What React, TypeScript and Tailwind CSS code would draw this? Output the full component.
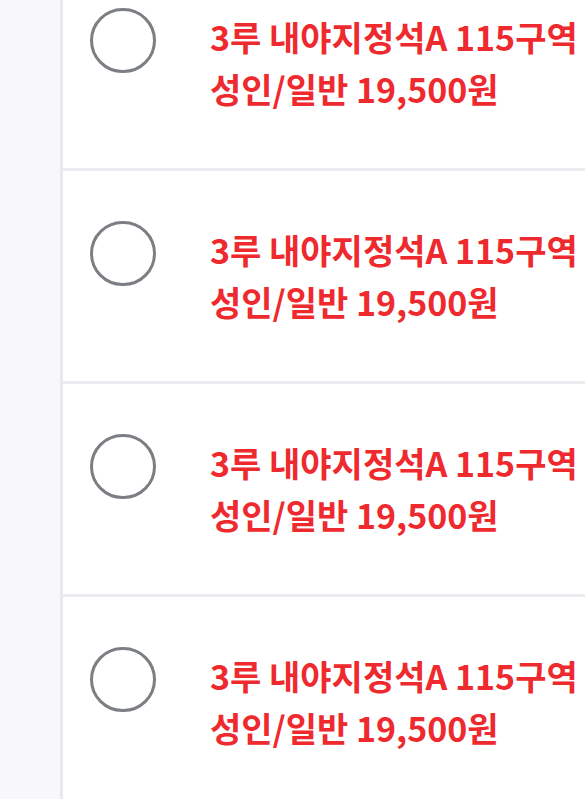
import React from "react";

function Row() {
  return (
    <div className="flex h-[213px] shrink-0 items-center border-b-[3px] border-[#ebebef] pl-[27px]">
      <div className="flex items-start">
        <div className="mt-[-3px] h-[65px] w-[66px] shrink-0 rounded-full border-[3px] border-[#7b7e83] bg-white" />
        <div className="ml-[54px] whitespace-nowrap text-[34px] font-bold leading-[52px] text-[#ee2a2f]">
          <div>3루 내야지정석A 115구역</div>
          <div>성인/일반 19,500원</div>
        </div>
      </div>
    </div>
  );
}

export default function App() {
  return (
    <div
      className="flex h-[799px] w-[585px] overflow-hidden bg-[#f8f8fa]"
      style={{ fontFamily: '"Noto Sans CJK KR", "Noto Sans", sans-serif' }}
    >
      <div className="w-[60px] shrink-0" />
      <div className="min-w-0 flex-1 overflow-hidden border-l-[3px] border-[#e9e9ed] bg-white">
        <div className="-mt-[42px] flex flex-col">
          <Row />
          <Row />
          <Row />
          <Row />
        </div>
      </div>
    </div>
  );
}
